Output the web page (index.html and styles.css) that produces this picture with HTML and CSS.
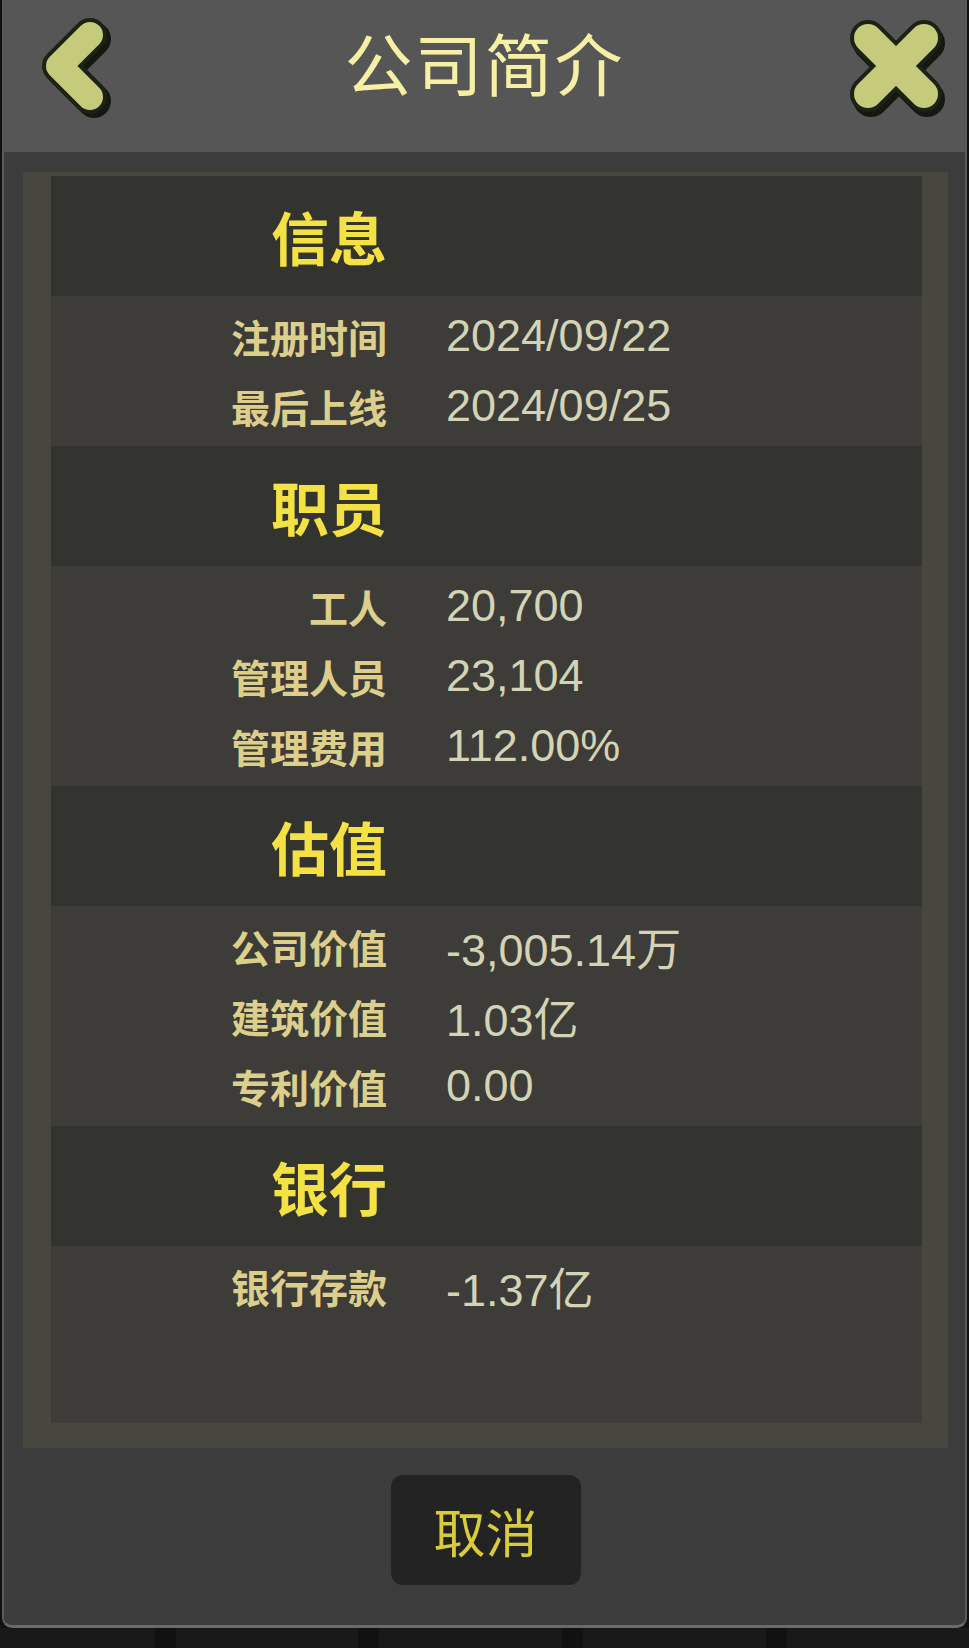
FILE: index.html
```html
<!DOCTYPE html>
<html lang="zh-CN">
<head>
  <meta charset="UTF-8">
  <title>公司简介</title>
  <link rel="stylesheet" href="styles.css">
</head>
<body>

  <div class="panel">

    <!-- 顶栏 -->
    <div class="topbar">
      <svg class="btn-back" width="84" height="110" viewBox="0 0 84 110">
        <polyline points="56,29 25,60 56,91" class="shadow" />
        <polyline points="52,25 21,56 52,87" class="edge" />
        <polyline points="52,25 21,56 52,87" class="fill" />
      </svg>
      <div class="title">公司简介</div>
      <svg class="btn-close" width="120" height="120" viewBox="0 0 120 120">
        <path d="M31 33 L87 89 M87 33 L31 89" class="shadow" />
        <path d="M28 28 L84 84 M84 28 L28 84" class="edge" />
        <path d="M28 28 L84 84 M84 28 L28 84" class="fill" />
      </svg>
    </div>

    <div class="content">
      <div class="frame">
        <div class="table">

          <div class="sec-head"><span>信息</span></div>
          <div class="sec-body">
            <div class="row"><span class="label">注册时间</span><span class="value">2024/09/22</span></div>
            <div class="row"><span class="label">最后上线</span><span class="value">2024/09/25</span></div>
          </div>

          <div class="sec-head"><span>职员</span></div>
          <div class="sec-body">
            <div class="row"><span class="label">工人</span><span class="value">20,700</span></div>
            <div class="row"><span class="label">管理人员</span><span class="value">23,104</span></div>
            <div class="row"><span class="label">管理费用</span><span class="value">112.00%</span></div>
          </div>

          <div class="sec-head"><span>估值</span></div>
          <div class="sec-body">
            <div class="row"><span class="label">公司价值</span><span class="value">-3,005.14万</span></div>
            <div class="row"><span class="label">建筑价值</span><span class="value">1.03亿</span></div>
            <div class="row"><span class="label">专利价值</span><span class="value">0.00</span></div>
          </div>

          <div class="sec-head"><span>银行</span></div>
          <div class="sec-body last">
            <div class="row"><span class="label">银行存款</span><span class="value">-1.37亿</span></div>
          </div>

        </div>
      </div>

      <div class="footer">
        <div class="btn-cancel">取消</div>
      </div>
    </div>
  </div>

  <!-- 底部标签 -->
  <div class="tabs">
    <div class="tab first"></div>
    <div class="tab"></div>
    <div class="tab"></div>
    <div class="tab"></div>
    <div class="tab"></div>
  </div>

</body>
</html>
```

FILE: styles.css
```css
body {
  margin: 0;
  background-color: #111;
  font-family: "Noto Sans CJK SC", sans-serif;
}

.panel {
  margin: 0 2px;
  border-left: 2px solid #5a5a5a;
  border-right: 2px solid #5a5a5a;
  border-bottom: 3px solid #6a6a6a;
  border-radius: 0 0 10px 10px;
  background-color: #3c3c3c;
  overflow: hidden;
}

.topbar {
  height: 152px;
  box-sizing: border-box;
  background-color: #565656;
  display: grid;
  grid-template-columns: 1fr auto 1fr;
  align-items: start;
  padding: 10px 5px 0 5px;
}

.btn-back {
  margin-left: 29px;
}

.title {
  font-size: 68px;
  line-height: 104px;
  color: #f6f0a4;
  letter-spacing: 2px;
}

.btn-close {
  justify-self: end;
}

.topbar .shadow,
.topbar .edge,
.topbar .fill {
  fill: none;
  stroke-linecap: round;
  stroke-linejoin: round;
}

.btn-back .shadow { stroke: #141810; stroke-width: 34px; }
.btn-back .edge { stroke: #1c2215; stroke-width: 34px; }
.btn-back .fill { stroke: #c6ca7b; stroke-width: 26px; }

.btn-close .shadow { stroke: #141810; stroke-width: 36px; }
.btn-close .edge { stroke: #1c2215; stroke-width: 36px; }
.btn-close .fill { stroke: #c6ca7b; stroke-width: 28px; }

.content {
  padding: 20px 17px 0 19px;
}

.frame {
  background-color: #47463f;
  padding: 4px 26px 25px 28px;
}

.table {
  display: flex;
  flex-direction: column;
}

.sec-head {
  height: 120px;
  background-color: #333330;
  display: grid;
  grid-template-columns: 336px 1fr;
  align-items: center;
}

.sec-head span {
  text-align: right;
  font-size: 58px;
  font-weight: bold;
  color: #f4e244;
}

.sec-body {
  background-color: #3d3c38;
  padding: 5px 0;
}

.sec-body.last {
  min-height: 167px;
}

.row {
  height: 70px;
  display: grid;
  grid-template-columns: 336px 1fr;
  column-gap: 59px;
  align-items: center;
}

.label {
  text-align: right;
  font-size: 39px;
  font-weight: bold;
  color: #dccf8c;
}

.value {
  font-family: "Liberation Sans", "Noto Sans CJK SC", sans-serif;
  font-size: 45px;
  color: #d3d3b5;
}

.footer {
  height: 177px;
  display: flex;
  justify-content: center;
  padding-top: 27px;
  box-sizing: border-box;
}

.btn-cancel {
  width: 190px;
  height: 110px;
  border-radius: 12px;
  background-color: #232323;
  color: #d8cb3c;
  font-size: 52px;
  display: flex;
  align-items: center;
  justify-content: center;
}

.tabs {
  display: flex;
  gap: 21px;
  height: 20px;
}

.tab {
  width: 192px;
  background-color: #191919;
}

.tab.first {
  width: 163px;
}
```
